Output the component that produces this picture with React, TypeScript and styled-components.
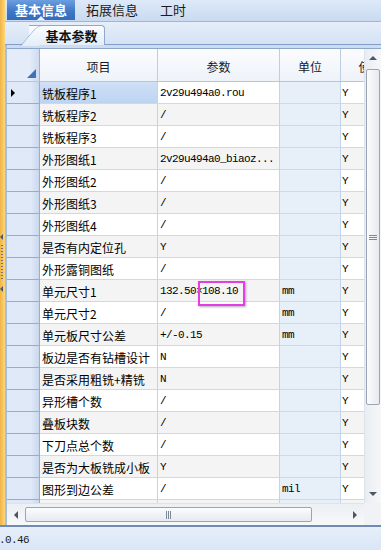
import styled, { createGlobalStyle } from "styled-components";

const GlobalStyle = createGlobalStyle`
  html, body {
    margin: 0;
    padding: 0;
  }
  body {
    width: 381px;
    height: 550px;
    overflow: hidden;
    background: #dfe9f6;
    font-family: "Noto Sans CJK SC", sans-serif;
  }
`;

const COLUMNS = "33px 118px 122px 61px 60px";

type RowData = [string, string, string, string];

const rows: RowData[] = [
  ["铣板程序1", "2v29u494a0.rou", "", "Y"],
  ["铣板程序2", "/", "", "Y"],
  ["铣板程序3", "/", "", "Y"],
  ["外形图纸1", "2v29u494a0_biaoz...", "", "Y"],
  ["外形图纸2", "/", "", "Y"],
  ["外形图纸3", "/", "", "Y"],
  ["外形图纸4", "/", "", "Y"],
  ["是否有内定位孔", "Y", "", "Y"],
  ["外形露铜图纸", "/", "", "Y"],
  ["单元尺寸1", "132.50×108.10", "mm", "Y"],
  ["单元尺寸2", "/", "mm", "Y"],
  ["单元板尺寸公差", "+/-0.15", "mm", "Y"],
  ["板边是否有钻槽设计", "N", "", "Y"],
  ["是否采用粗铣+精铣", "N", "", "Y"],
  ["异形槽个数", "/", "", "Y"],
  ["叠板块数", "/", "", "Y"],
  ["下刀点总个数", "/", "", "Y"],
  ["是否为大板铣成小板", "Y", "", "Y"],
  ["图形到边公差", "/", "mil", "Y"],
  ["最小铣刀直径", "/", "", "Y"],
];

function App() {
  return (
    <>
      <GlobalStyle />
      <Page>
        <Body>
          <Splitter>
            <SplitArrow />
            <SplitGrip />
            <SplitArrow />
          </Splitter>
          <Main>
            <TabBar>
              <Tab $active>基本信息</Tab>
              <Tab>拓展信息</Tab>
              <Tab>工时</Tab>
            </TabBar>
            <SubTabBar>
              <SubTab>基本参数</SubTab>
            </SubTabBar>
            <Frame>
              <GridArea>
                <Viewport>
                  <HeaderRow>
                    <CornerCell>
                      <CornerMark />
                    </CornerCell>
                    <HeaderCell>项目</HeaderCell>
                    <HeaderCell>参数</HeaderCell>
                    <HeaderCell>单位</HeaderCell>
                    <HeaderCell>使用</HeaderCell>
                  </HeaderRow>
                  {rows.map(([item, value, unit, flag], i) => (
                    <Row key={i}>
                      <IndicatorCell>{i === 0 && <RowPointer />}</IndicatorCell>
                      <ItemCell $alt={i % 2 === 1} $selected={i === 0}>
                        {item}
                      </ItemCell>
                      <ValueCell $alt={i % 2 === 1}>
                        {value}
                        {i === 9 && <Highlight />}
                      </ValueCell>
                      <UnitCell>{unit}</UnitCell>
                      <FlagCell $alt={i % 2 === 1}>{flag}</FlagCell>
                    </Row>
                  ))}
                </Viewport>
                <VScroll>
                  <ArrowButton>
                    <ArrowUp />
                  </ArrowButton>
                  <VTrack>
                    <VThumb>
                      <GripH />
                    </VThumb>
                  </VTrack>
                  <ArrowButton>
                    <ArrowDown />
                  </ArrowButton>
                </VScroll>
              </GridArea>
              <HScrollRow>
                <HScroll>
                  <HArrowButton>
                    <ArrowLeft />
                  </HArrowButton>
                  <HTrack>
                    <HThumb>
                      <GripV />
                    </HThumb>
                  </HTrack>
                  <HArrowButton>
                    <ArrowRight />
                  </HArrowButton>
                </HScroll>
                <ScrollCorner />
              </HScrollRow>
            </Frame>
          </Main>
        </Body>
        <StatusBar>
          <Version>V1.0.46</Version>
        </StatusBar>
      </Page>
    </>
  );
}

const Page = styled.div`
  width: 381px;
  height: 550px;
  display: flex;
  flex-direction: column;
`;

const Body = styled.div`
  height: 525px;
  display: flex;
`;

const Splitter = styled.div`
  width: 5px;
  background: linear-gradient(to right, #f0b445, #fcd77a);
  display: flex;
  flex-direction: column;
  justify-content: center;
  align-items: flex-start;
  gap: 5px;
`;

const SplitArrow = styled.div`
  width: 0;
  height: 0;
  border-right: 3px solid #4a5a70;
  border-top: 3px solid transparent;
  border-bottom: 3px solid transparent;
`;

const SplitGrip = styled.div`
  width: 2px;
  height: 36px;
  margin-left: 1px;
  background: repeating-linear-gradient(#6b7384 0 1px, transparent 1px 3px);
`;

const Main = styled.div`
  flex: 1;
  display: flex;
  flex-direction: column;
  min-width: 0;
`;

const TabBar = styled.div`
  height: 22px;
  box-sizing: border-box;
  display: flex;
  align-items: flex-start;
  padding-left: 2px;
  background: linear-gradient(#dde9f8, #c9daf0);
  border-bottom: 1px solid #9fb6d6;
`;

const Tab = styled.div<{ $active?: boolean }>`
  position: relative;
  height: 20px;
  line-height: 19px;
  padding: ${(p) => (p.$active ? "0 8px" : "0 11px")};
  font-size: 13px;
  font-weight: ${(p) => (p.$active ? 700 : 400)};
  color: ${(p) => (p.$active ? "#ffffff" : "#1b1b1b")};
  background: ${(p) =>
    p.$active ? "linear-gradient(#6b9fe0, #3f78c6 55%, #326bbb)" : "transparent"};

  &::after {
    content: "";
    display: ${(p) => (p.$active ? "block" : "none")};
    position: absolute;
    left: 50%;
    bottom: 0;
    margin-left: -4px;
    border-left: 4px solid transparent;
    border-right: 4px solid transparent;
    border-bottom: 4px solid #eef4fc;
  }
`;

const SubTabBar = styled.div`
  height: 23px;
  box-sizing: border-box;
  display: flex;
  align-items: flex-end;
  padding-left: 24px;
  background: linear-gradient(#e6eef9, #d4e2f4);
  border-bottom: 1px solid #7f9fca;
`;

const SubTab = styled.div`
  position: relative;
  width: 76px;
  height: 20px;
  margin-bottom: -1px;
  box-sizing: border-box;
  line-height: 19px;
  text-align: center;
  padding-left: 10px;
  font-size: 13px;
  font-weight: 700;
  color: #111;
  background: linear-gradient(#fbfdff, #e3edf9);
  border-top: 1px solid #8fa9cc;
  border-right: 1px solid #8fa9cc;
  border-top-right-radius: 4px;

  &::before {
    content: "";
    position: absolute;
    left: -9px;
    top: -1px;
    width: 18px;
    height: 20px;
    background: linear-gradient(#fbfdff, #e3edf9);
    border-left: 1px solid #8fa9cc;
    border-top: 1px solid #8fa9cc;
    border-top-left-radius: 6px;
    transform: skewX(-40deg);
    transform-origin: bottom left;
    z-index: -1;
  }
  z-index: 1;
`;

const Frame = styled.div`
  flex: 1;
  display: flex;
  flex-direction: column;
  padding-top: 3px;
  background: #cddcf0;
  border-left: 2px solid #a9bedc;
  min-height: 0;
`;

const GridArea = styled.div`
  flex: 1;
  display: flex;
  min-height: 0;
  border-top: 1px solid #8ea7c9;
`;

const Viewport = styled.div`
  flex: 1;
  overflow: hidden;
  background: #ffffff;
  min-width: 0;
`;

const HeaderRow = styled.div`
  display: grid;
  grid-template-columns: ${COLUMNS};
  height: 33px;
  box-sizing: border-box;
  background: linear-gradient(#fbfcfe, #eef3fa);
  border-bottom: 1px solid #b4c6df;
`;

const HeaderCell = styled.div`
  display: flex;
  align-items: center;
  justify-content: center;
  padding-top: 2px;
  font-size: 12px;
  color: #1a1a1a;
  border-right: 1px solid #bccde4;
  white-space: nowrap;
  overflow: hidden;
`;

const CornerCell = styled.div`
  display: flex;
  align-items: flex-end;
  justify-content: flex-end;
  padding: 0 3px 3px 0;
  background: linear-gradient(to right, #e3ecf8 70%, #cfdcef);
  border-right: 1px solid #9fb3cf;
`;

const CornerMark = styled.div`
  width: 0;
  height: 0;
  border-left: 9px solid transparent;
  border-bottom: 9px solid #3d70c0;
`;

const Row = styled.div`
  display: grid;
  grid-template-columns: ${COLUMNS};
  height: 22px;
`;

const CellBase = styled.div`
  box-sizing: border-box;
  display: flex;
  align-items: center;
  padding-top: 1px;
  white-space: nowrap;
  overflow: hidden;
  border-right: 1px solid #c2d3ea;
  border-bottom: 1px solid #cbd9ec;
  color: #000;
`;

const IndicatorCell = styled(CellBase)`
  padding-left: 4px;
  background: linear-gradient(to right, #dfe9f7 75%, #c9d8ee);
  border-right-color: #98add0;
  border-bottom-color: #98acc9;
`;

const RowPointer = styled.div`
  width: 0;
  height: 0;
  border-left: 4px solid #000;
  border-top: 4px solid transparent;
  border-bottom: 4px solid transparent;
`;

const ItemCell = styled(CellBase)<{ $alt: boolean; $selected: boolean }>`
  padding-left: 2px;
  font-size: 12px;
  background: ${(p) =>
    p.$selected
      ? "linear-gradient(#cfe0f6, #bdd4f1)"
      : p.$alt
        ? "#f4f4f4"
        : "#ffffff"};
`;

const MonoCell = styled(CellBase)`
  font-family: "Liberation Mono", "Noto Sans CJK SC", monospace;
  font-size: 11px;
  letter-spacing: -0.6px;
`;

const ValueCell = styled(MonoCell)<{ $alt: boolean }>`
  position: relative;
  overflow: visible;
  padding-left: 2px;
  background: ${(p) => (p.$alt ? "#f4f4f4" : "#ffffff")};
`;

const UnitCell = styled(MonoCell)`
  padding-left: 2px;
  background: #e7eff9;
`;

const FlagCell = styled(MonoCell)<{ $alt: boolean }>`
  padding-left: 1px;
  background: ${(p) => (p.$alt ? "#f4f4f4" : "#ffffff")};
`;

const Highlight = styled.div`
  position: absolute;
  left: 40px;
  top: 1px;
  width: 47px;
  height: 25px;
  box-sizing: border-box;
  border: 2px solid #e23ee4;
  box-shadow: 1px 1px 2px rgba(90, 60, 100, 0.45);
  z-index: 2;
`;

const VScroll = styled.div`
  width: 17px;
  display: flex;
  flex-direction: column;
  background: linear-gradient(to right, #e9edf2, #f6f7f9);
  border-left: 1px solid #dde3ea;
  box-sizing: border-box;
`;

const ArrowButton = styled.div`
  height: 18px;
  display: flex;
  align-items: center;
  justify-content: center;
`;

const ArrowUp = styled.div`
  border-left: 4px solid transparent;
  border-right: 4px solid transparent;
  border-bottom: 4px solid #4d5663;
`;

const ArrowDown = styled.div`
  border-left: 4px solid transparent;
  border-right: 4px solid transparent;
  border-top: 4px solid #4d5663;
`;

const VTrack = styled.div`
  flex: 1;
  display: flex;
  flex-direction: column;
  padding: 2px 1px;
`;

const VThumb = styled.div`
  height: 336px;
  box-sizing: border-box;
  display: flex;
  align-items: center;
  justify-content: center;
  border: 1px solid #9aa4b2;
  border-radius: 2px;
  background: linear-gradient(to right, #fbfcfd, #e6eaef);
`;

const GripH = styled.div`
  width: 8px;
  height: 5px;
  background: repeating-linear-gradient(#7d8796 0 1px, transparent 1px 2px);
`;

const HScrollRow = styled.div`
  height: 22px;
  display: flex;
`;

const HScroll = styled.div`
  flex: 1;
  display: flex;
  align-items: center;
  background: linear-gradient(#eceff3, #f7f8fa);
  border-top: 1px solid #dde3ea;
  box-sizing: border-box;
`;

const HArrowButton = styled.div`
  width: 18px;
  height: 100%;
  display: flex;
  align-items: center;
  justify-content: center;
`;

const ArrowLeft = styled.div`
  border-top: 4px solid transparent;
  border-bottom: 4px solid transparent;
  border-right: 4px solid #4d5663;
`;

const ArrowRight = styled.div`
  border-top: 4px solid transparent;
  border-bottom: 4px solid transparent;
  border-left: 4px solid #4d5663;
`;

const HTrack = styled.div`
  flex: 1;
  display: flex;
  align-items: center;
  padding-right: 26px;
`;

const HThumb = styled.div`
  width: 287px;
  height: 15px;
  box-sizing: border-box;
  display: flex;
  align-items: center;
  justify-content: center;
  border: 1px solid #9aa4b2;
  border-radius: 2px;
  background: linear-gradient(#fbfcfd, #e6eaef);
`;

const GripV = styled.div`
  width: 5px;
  height: 8px;
  background: repeating-linear-gradient(to right, #7d8796 0 1px, transparent 1px 2px);
`;

const ScrollCorner = styled.div`
  width: 17px;
  background: #f0f2f5;
`;

const StatusBar = styled.div`
  flex: 1;
  display: flex;
  align-items: center;
  overflow: hidden;
  border-top: 2px solid #6f8bb3;
  background: linear-gradient(#e6eef9, #dae6f6);
`;

const Version = styled.div`
  margin-left: -13px;
  padding-top: 2px;
  font-family: "Liberation Mono", monospace;
  font-size: 11px;
  letter-spacing: -0.6px;
  color: #1b1b1b;
  white-space: nowrap;
`;

export default App;
